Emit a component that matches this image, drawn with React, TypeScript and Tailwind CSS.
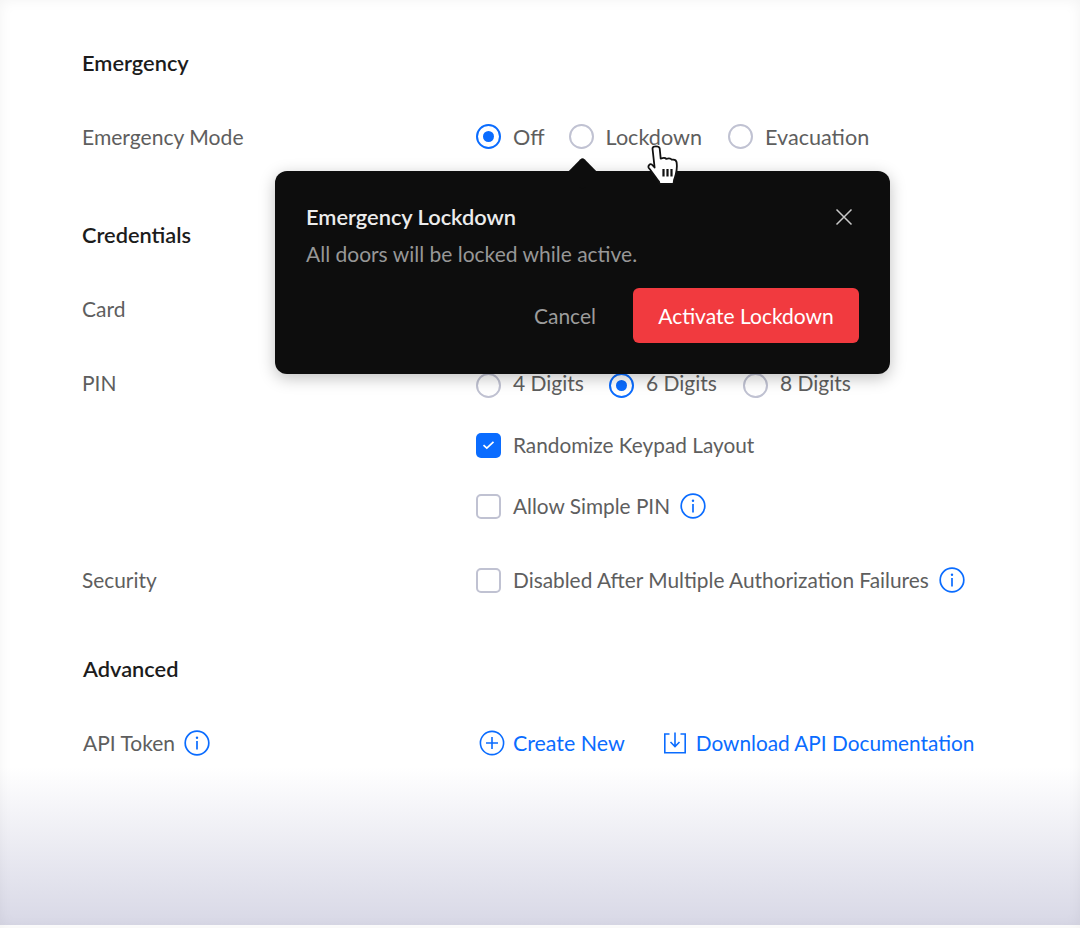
import { ReactNode } from "react"

function Radio({ checked = false }: { checked?: boolean }) {
    return (
        <span
            className={`flex h-[25px] w-[25px] shrink-0 items-center justify-center rounded-full bg-white ${
                checked ? "border-2 border-[#0a6cff]" : "border-2 border-[#c0c2d2]"
            }`}
        >
            {checked && <span className="h-[11px] w-[11px] rounded-full bg-[#0a6cff]" />}
        </span>
    )
}

function Check({ checked = false }: { checked?: boolean }) {
    return (
        <span
            className={`flex h-[25px] w-[25px] shrink-0 items-center justify-center rounded-[5px] ${
                checked ? "bg-[#0a6cff]" : "border-2 border-[#c0c2d2] bg-white"
            }`}
        >
            {checked && (
                <svg width="13" height="10" viewBox="0 0 13 10" fill="none">
                    <path d="M1.5 5.2 4.8 8.2 11.5 1.8" stroke="white" strokeWidth="1.7" />
                </svg>
            )}
        </span>
    )
}

function InfoIcon() {
    return (
        <svg width="26" height="26" viewBox="0 0 26 26" fill="none" className="shrink-0">
            <circle cx="13" cy="13" r="11.8" stroke="#0a6cff" strokeWidth="1.7" />
            <circle cx="13" cy="7.8" r="1.2" fill="#0a6cff" />
            <path d="M13 11v8.5" stroke="#0a6cff" strokeWidth="1.7" />
        </svg>
    )
}

function Row({ label, className = "", children }: { label?: ReactNode; className?: string; children?: ReactNode }) {
    return (
        <div className={`flex h-10 items-center ${className}`}>
            <div className="w-[394px] shrink-0">{label}</div>
            {children}
        </div>
    )
}

function Heading({ title, className = "" }: { title: string; className?: string }) {
    return <div className={`flex h-10 items-center text-[21.8px] font-semibold text-[#1c1c1c] ${className}`}>{title}</div>
}

function HandCursor() {
    return (
        <svg width="34" height="42" viewBox="0 0 34 42" className="absolute left-[647px] top-[145px]">
            <path
                d="M5.500 3.500c0-2.900 6.800-2.900 7.200 0l1 10.200c2.300-1 4.600-1 5.500.2 2.600-.9 4.600-.6 5.600.8 2.600-.5 4.400.6 4.800 2.600.5 3.600.2 8.400-.9 12.400-.5 2-1 3.400-1.600 5l-.6 4.300H12.500l-.5-2.500C9 33 4.800 26.500 1.800 23c-1.200-2 1-4.600 3-3.500l2.800 3L5.500 3.500Z"
                fill="white"
                stroke="#111"
                strokeWidth="1.800"
                strokeLinejoin="round"
            />
            <path d="M16.500 24v7.500M20.500 24v7.500M24.500 24v7.500" stroke="#111" strokeWidth="2.200" />
        </svg>
    )
}

function LockdownPopover() {
    return (
        <div className="absolute left-[275px] top-[171px] h-[203px] w-[615px] rounded-[12px] bg-[#0d0d0d] px-[31px] pt-[32px] shadow-[0_4px_16px_rgba(0,0,0,0.25)]">
            <div className="absolute -top-[9px] left-[296px] h-[23px] w-[23px] rotate-45 rounded-[3px] bg-[#0d0d0d]" />
            <div className="relative flex items-center justify-between">
                <div className="text-[21.8px] leading-[28px] font-semibold text-[#ececec]">Emergency Lockdown</div>
                <svg width="18" height="18" viewBox="0 0 18 18" fill="none" className="mr-[6px]">
                    <path d="M1.500 1.500 16.500 16.500M16.500 1.500 1.500 16.500" stroke="#c8c8c8" strokeWidth="1.500" />
                </svg>
            </div>
            <div className="mt-[9px] text-[21px] leading-[28px] text-[#979797]">All doors will be locked while active.</div>
            <div className="mt-[20px] flex items-center justify-end gap-[37px]">
                <span className="text-[21px] text-[#9c9c9c]">Cancel</span>
                <button type="button" className="h-[55px] w-[226px] rounded-[6px] bg-[#f13a3f] text-[21px] text-white">
                    Activate Lockdown
                </button>
            </div>
        </div>
    )
}

export default function App() {
    return (
        <div className="relative h-[928px] w-[1080px] overflow-hidden bg-white font-['Lato',sans-serif] text-[21px] text-[#5e5e5e]">
            <div className="pointer-events-none absolute inset-x-0 bottom-[3px] h-[158px] bg-gradient-to-b from-white to-[#d8d8e6]" />
            <div className="pointer-events-none absolute inset-0 shadow-[inset_0_0_14px_rgba(0,0,0,0.05)]" />

            <div className="relative px-[82px] pt-[43px]">
                <Heading title="Emergency" />
                <Row label="Emergency Mode" className="mt-[34px] text-[21.1px]">
                    <div className="flex items-center text-[21.6px]">
                        <Radio checked />
                        <span className="ml-[12px]">Off</span>
                        <span className="ml-[24px]"><Radio /></span>
                        <span className="ml-[12px]">Lockdown</span>
                        <span className="ml-[26px]"><Radio /></span>
                        <span className="ml-[12px]">Evacuation</span>
                    </div>
                </Row>

                <Heading title="Credentials" className="mt-[58px]" />
                <Row label="Card" className="mt-[34px]" />
                <Row label="PIN" className="mt-[34px]">
                    <div className="flex items-center">
                        <span className="mt-[5px]"><Radio /></span>
                        <span className="ml-[12px]">4 Digits</span>
                        <span className="ml-[25px] mt-[5px]"><Radio checked /></span>
                        <span className="ml-[12px]">6 Digits</span>
                        <span className="ml-[26px] mt-[5px]"><Radio /></span>
                        <span className="ml-[12px]">8 Digits</span>
                    </div>
                </Row>
                <Row className="mt-[22px] text-[20.8px]">
                    <Check checked />
                    <span className="ml-[12px]">Randomize Keypad Layout</span>
                </Row>
                <Row className="mt-[21px] text-[20.8px]">
                    <Check />
                    <span className="ml-[12px]">Allow Simple PIN</span>
                    <span className="ml-[10px]"><InfoIcon /></span>
                </Row>
                <Row label="Security" className="mt-[34px] text-[20.85px]">
                    <Check />
                    <span className="ml-[12px]">Disabled After Multiple Authorization Failures</span>
                    <span className="ml-[10px]"><InfoIcon /></span>
                </Row>

                <Heading title="Advanced" className="ml-[1px] mt-[49px]" />
                <Row
                    className="ml-[1px] mt-[34px]"
                    label={
                        <span className="flex items-center gap-[9px]">
                            API Token <InfoIcon />
                        </span>
                    }
                >
                    <div className="ml-[2px] flex items-center text-[#0a6cff]">
                        <svg width="26" height="26" viewBox="0 0 26 26" fill="none">
                            <circle cx="13" cy="13" r="11.600" stroke="#0a6cff" strokeWidth="1.600" />
                            <path d="M13 7v12M7 13h12" stroke="#0a6cff" strokeWidth="1.600" />
                        </svg>
                        <span className="ml-[8px] text-[21.4px]">Create New</span>
                        <svg width="24" height="24" viewBox="0 0 24 24" fill="none" className="ml-[38px]">
                            <path d="M6.500 3H1.800v18.800h20.400V3h-4.700" stroke="#0a6cff" strokeWidth="1.600" />
                            <path d="M12 1.500v13.500M7.500 11l4.500 4.500 4.500-4.500" stroke="#0a6cff" strokeWidth="1.600" />
                        </svg>
                        <span className="ml-[9px] text-[20.8px]">Download API Documentation</span>
                    </div>
                </Row>
            </div>

            <LockdownPopover />
            <HandCursor />
        </div>
    )
}
